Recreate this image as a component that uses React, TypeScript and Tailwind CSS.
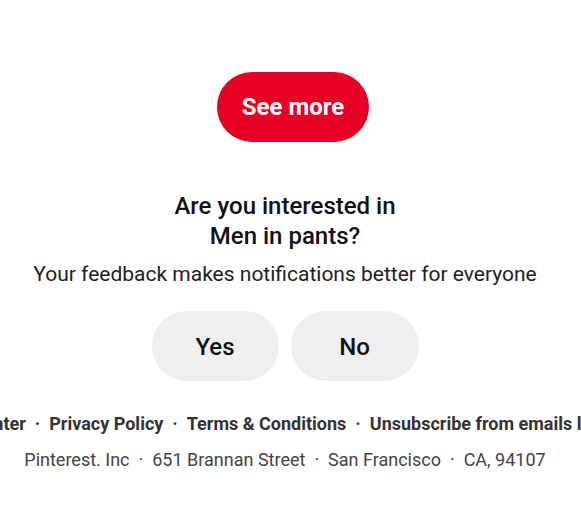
export default function App() {
  return (
    <div className="min-h-[531px] w-full overflow-hidden bg-white">
      <div
        className="flex w-[570px] flex-col items-center text-[#111]"
        style={{ fontFamily: 'Roboto, "Liberation Sans", sans-serif' }}
      >
        <button className="ml-[16px] mt-[72px] flex h-[70px] w-[152px] items-center justify-center rounded-full bg-[#e60023] text-[24px] font-bold text-white">
          See more
        </button>

        <h2 className="mt-[49px] text-center text-[24px] font-medium leading-[30px]">
          Are you interested in
          <br />
          Men in pants?
        </h2>
        <p className="mt-[8px] text-center text-[21px] leading-[30px] text-[#222]">
          Your feedback makes notifications better for everyone
        </p>

        <div className="mt-[22px] flex gap-3">
          <button className="flex h-[70px] w-[127px] items-center justify-center rounded-full bg-[#efefef] pt-[1px] text-[24px] font-medium">
            Yes
          </button>
          <button className="flex h-[70px] w-[128px] items-center justify-center rounded-full bg-[#efefef] pt-[1px] text-[24px] font-medium">
            No
          </button>
        </div>

        <div className="mt-[31px] flex w-full justify-center whitespace-nowrap text-[18px] font-bold leading-[24px] text-[#333]">
          <span>Help Center</span>
          <span className="px-[9px]">·</span>
          <span>Privacy Policy</span>
          <span className="px-[9px]">·</span>
          <span>Terms &amp; Conditions</span>
          <span className="px-[9px]">·</span>
          <span>Unsubscribe from emails like this</span>
        </div>

        <div className="mt-[12px] flex w-full justify-center whitespace-nowrap text-[18px] leading-[24px] text-[#444]">
          <span>Pinterest. Inc</span>
          <span className="px-[9px]">·</span>
          <span>651 Brannan Street</span>
          <span className="px-[9px]">·</span>
          <span>San Francisco</span>
          <span className="px-[9px]">·</span>
          <span>CA, 94107</span>
        </div>
      </div>
    </div>
  )
}
